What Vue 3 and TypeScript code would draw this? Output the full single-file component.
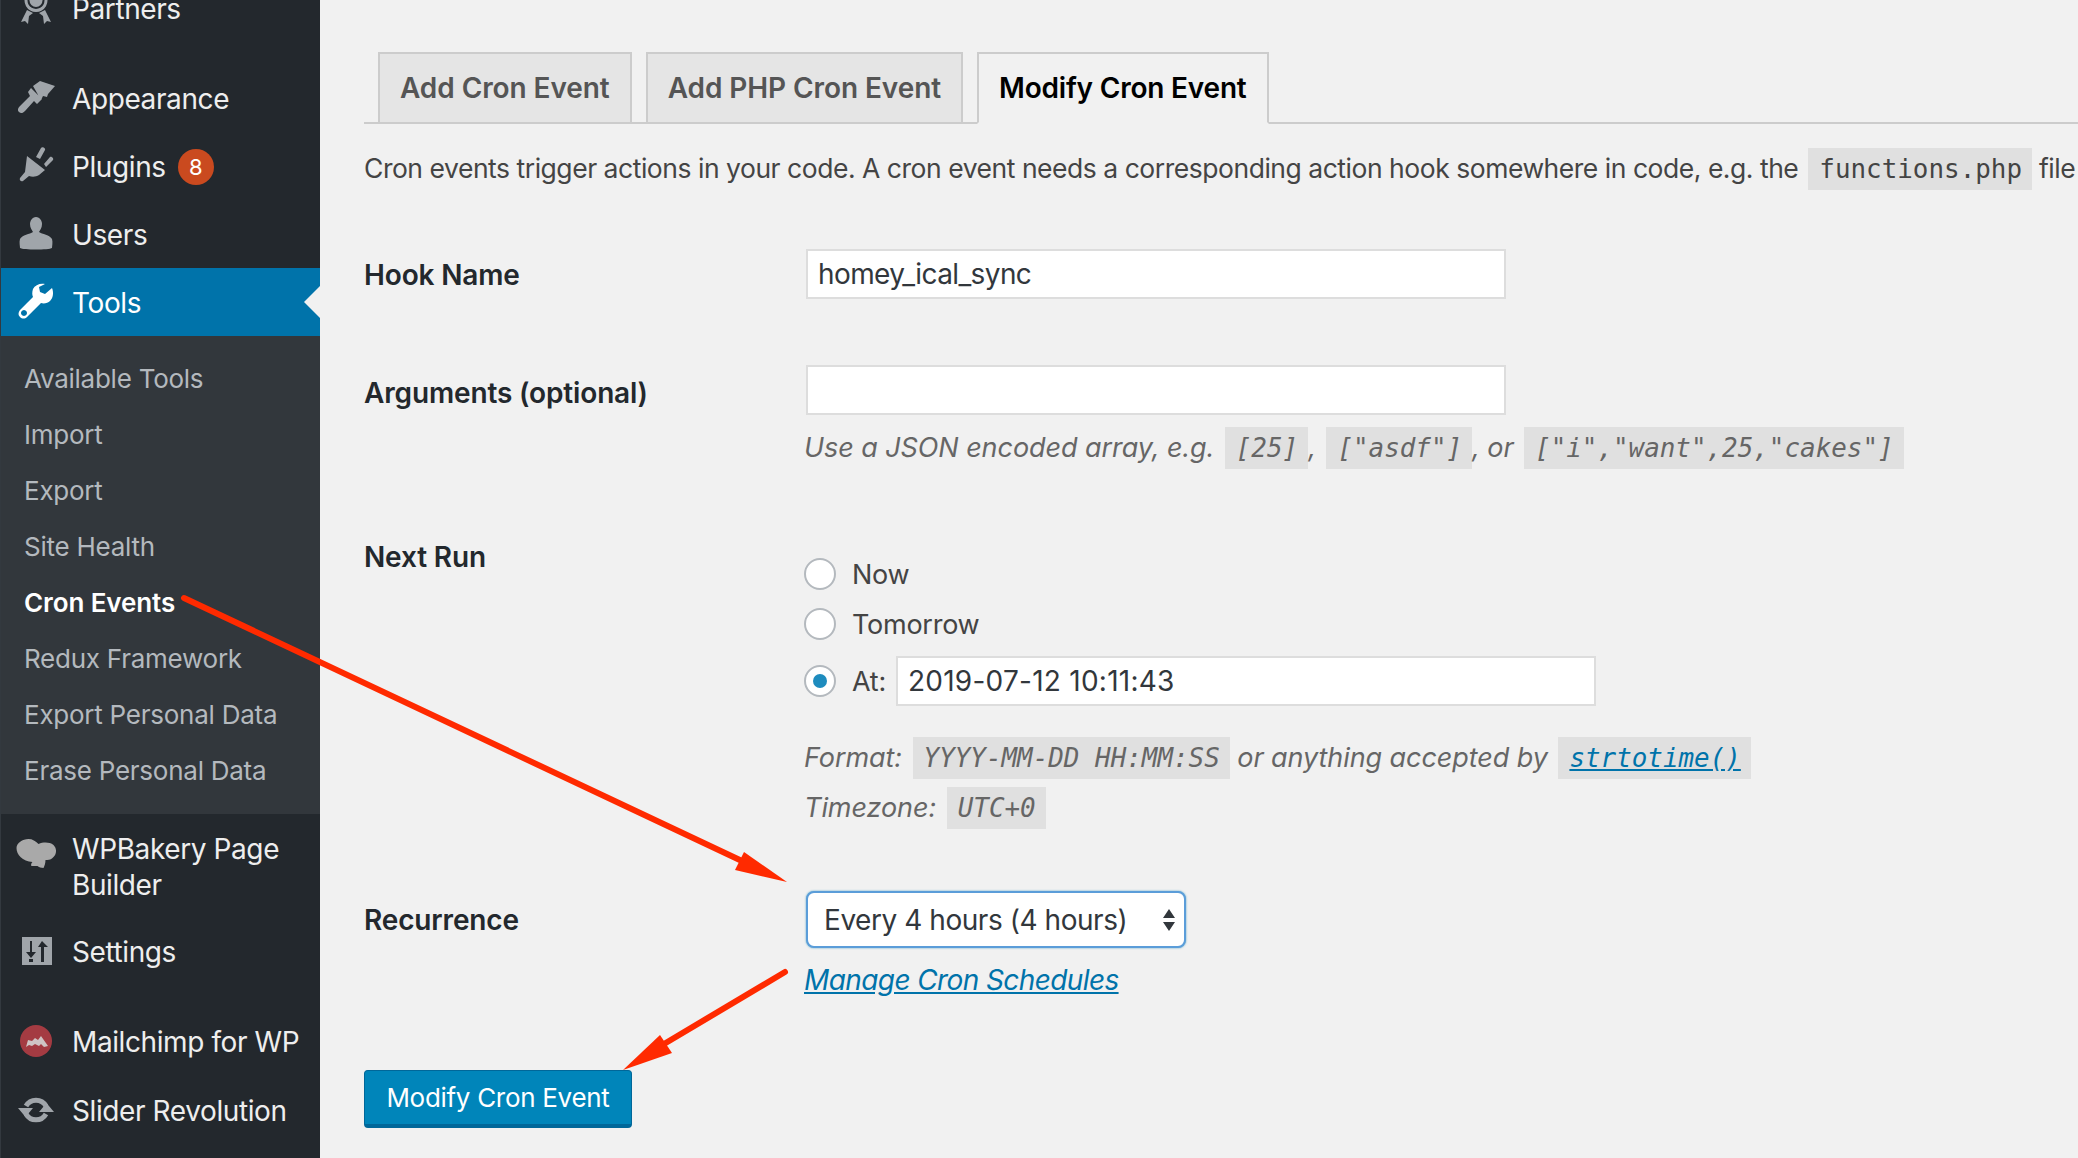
<script setup lang="ts">
const submenu = [
  { label: 'Available Tools' },
  { label: 'Import' },
  { label: 'Export' },
  { label: 'Site Health' },
  { label: 'Cron Events', current: true },
  { label: 'Redux Framework' },
  { label: 'Export Personal Data' },
  { label: 'Erase Personal Data' },
]
</script>

<template>
  <div class="page">
    <aside class="sidebar">
      <div class="menu-item partners">
        <svg class="icon" viewBox="0 0 40 40"><path fill-rule="evenodd" d="M18 1a11.500 11.500 0 1 0 .01 0zM18 4a8.500 8.500 0 1 1-.01 0z" fill="#a0a5aa"/><circle cx="18" cy="12.500" r="6.500" fill="#a0a5aa"/><path d="M9 22l6 3-4 3-1 8-3-3-4 1zM27 22l-6 3 4 3 1 8 3-3 4 1z" fill="#a0a5aa"/></svg>
        <span>Partners</span>
      </div>
      <div class="menu-item appearance">
        <svg class="icon" viewBox="0 0 40 40"><path d="M15 8l7-5 15 5-7 8-1 3-4-1-2 4zM13 10l11 11-5 5-3-3-9 10c-2 2-4 3-6 1s-1-4 1-6l10-10-2-4z" fill="#a0a5aa"/></svg>
        <span>Appearance</span>
      </div>
      <div class="menu-item plugins">
        <svg class="icon" viewBox="0 0 40 40"><path d="M18 11l5-9c1-2 5 0 4 2l-5 9zM26 18l6-7c2-1 4 2 3 3l-7 7zM9 10l18 14-6 5c-3 2-7 2-10 1l-6 5c-2 1-4-1-3-3l5-6z" fill="#a0a5aa"/></svg>
        <span>Plugins</span>
        <span class="badge">8</span>
      </div>
      <div class="menu-item users">
        <svg class="icon" viewBox="0 0 40 40"><path d="M18 3c4 0 6 4 6 7 0 4-2 6-3 8 3 2 11 3 13 7 1 3 0 7 0 9-3 2-29 2-32 0 0-2-1-6 0-9 2-4 10-5 13-7-1-2-3-4-3-8 0-3 2-7 6-7z" fill="#a0a5aa"/></svg>
        <span>Users</span>
      </div>
      <div class="menu-item active">
        <svg class="icon" viewBox="0 0 40 40"><path d="M34 6l-7 6-5-2-1-5 6-3c-5-1-10 1-12 5-1 3-1 6 0 8L2 28c-2 3-2 5 0 7s5 2 7 0l14-14c3 1 7 0 9-2 3-3 4-8 2-13zM6 28a3 3 0 1 1-.01 0z" fill="#fff" fill-rule="evenodd"/></svg>
        <span>Tools</span>
      </div>
      <ul class="submenu">
        <li v-for="item in submenu" :key="item.label" :class="{ current: item.current }">{{ item.label }}</li>
      </ul>
      <div class="menu-item bakery">
        <svg class="icon wide" viewBox="0 0 40 30"><path d="M0 9C0 4 6 0 12 0c4 0 7 2 10 5 5-2 11-2 15 1 4 4 3 10-1 13-2 2-5 2-7 2 0 3-1 6-2 8-2 0-5-1-6-2l-6 0c-1-1 0-3 1-4C6 22 0 16 0 9z" fill="#a9a9a9"/></svg>
        <span>WPBakery Page<br />Builder</span>
      </div>
      <div class="menu-item settings">
        <svg class="icon" viewBox="0 0 40 40"><path fill-rule="evenodd" d="M4 6h30v28H4zM12 10v11H8l5 6 5-6h-4V10zM11 28v3h4v-3zM24 10l-4 6h3v15h3V16h4z" fill="#a0a5aa"/></svg>
        <span>Settings</span>
      </div>
      <div class="menu-item mailchimp">
        <svg class="icon" viewBox="0 0 40 40"><circle cx="18" cy="20" r="16" fill="#a43b42"/><path d="M8 26l2-7 4 1 3-3 3 2 3-4 7 10-4 1-3-3-2 2-4-2-3 2-3-1z" fill="#cfc4c4"/></svg>
        <span>Mailchimp for WP</span>
      </div>
      <div class="menu-item slider">
        <svg class="icon" viewBox="0 0 40 40"><path d="M8 16A11.500 11.500 0 0 1 28 16M28 24A11.500 11.500 0 0 1 8 24" fill="none" stroke="#a0a5aa" stroke-width="5"/><path d="M0 18h15l-7.500 9zM21 22h15l-7.500-9z" fill="#a0a5aa"/></svg>
        <span>Slider Revolution</span>
      </div>
    </aside>

    <main class="content">
      <nav class="tabs">
        <a class="tab">Add Cron Event</a>
        <a class="tab">Add PHP Cron Event</a>
        <a class="tab selected">Modify Cron Event</a>
      </nav>
      <p class="intro">Cron events trigger actions in your code. A cron event needs a corresponding action hook somewhere in code, e.g. the <code>functions.php</code> file</p>

      <div class="row hook">
        <label>Hook Name</label>
        <div class="field"><div class="input hook-input">homey_ical_sync</div></div>
      </div>

      <div class="row args">
        <label>Arguments (optional)</label>
        <div class="field">
          <div class="input"></div>
          <p class="help">Use a JSON encoded array, e.g. <code>[25]</code>, <code>["asdf"]</code>, or <code>["i","want",25,"cakes"]</code></p>
        </div>
      </div>

      <div class="row next">
        <label>Next Run</label>
        <div class="field">
          <div class="radio-row first"><span class="radio"></span>Now</div>
          <div class="radio-row"><span class="radio"></span>Tomorrow</div>
          <div class="radio-row at"><span class="radio on"></span>At:<div class="input date">2019-07-12 10:11:43</div></div>
          <p class="help format">Format: <code>YYYY-MM-DD HH:MM:SS</code> or anything accepted by <code><a class="link">strtotime()</a></code></p>
          <p class="help zone">Timezone: <code>UTC+0</code></p>
        </div>
      </div>

      <div class="row recurrence">
        <label>Recurrence</label>
        <div class="field">
          <div class="select">
            <span>Every 4 hours (4 hours)</span>
            <svg class="updown" viewBox="0 0 14 24"><path d="M7 1l6 9H1zM7 23L1 14h12z" fill="#32373c"/></svg>
          </div>
          <a class="manage">Manage Cron Schedules</a>
        </div>
      </div>

      <button class="submit">Modify Cron Event</button>
    </main>

    <svg class="arrows" viewBox="0 0 2078 1158">
      <path d="M184 598L742 861" stroke="#ff2a00" stroke-width="6" stroke-linecap="round" fill="none"/>
      <path d="M787 882L744 852L735 870z" fill="#ff2a00"/>
      <path d="M785 972L664 1044" stroke="#ff2a00" stroke-width="6" stroke-linecap="round" fill="none"/>
      <path d="M623 1070L660 1035L672 1053z" fill="#ff2a00"/>
    </svg>
  </div>
</template>

<style>
html, body { margin: 0; background: #f1f1f1; overflow: hidden; }
</style>

<style scoped>
.page {
  position: relative;
  display: flex;
  width: 2078px;
  height: 1158px;
  overflow: hidden;
  background: #f1f1f1;
  font-family: Inter, "Liberation Sans", sans-serif;
  color: #23282d;
}
.sidebar {
  flex: 0 0 320px;
  box-sizing: border-box;
  height: 1158px;
  background: #23282d;
  border-left: 1px solid #33393f;
  overflow: hidden;
}
.menu-item {
  display: flex;
  align-items: center;
  height: 68px;
  color: #eeeeee;
  font-size: 28px;
  letter-spacing: -0.4px;
  line-height: 36px;
}
.menu-item > span:not(.badge) { position: relative; top: 1px; }
.menu-item .icon { flex: 0 0 40px; width: 40px; height: 40px; margin: 0 14px 0 17px; }
.partners { margin-top: -26px; }
.appearance { margin-top: 22px; }
.active { background: #0073aa; color: #fff; position: relative; }
.active::after {
  content: "";
  position: absolute;
  right: 0;
  top: 50%;
  margin-top: -16px;
  border: 16px solid transparent;
  border-right-color: #f1f1f1;
}
.badge {
  width: 36px;
  height: 36px;
  margin-left: 12px;
  border-radius: 50%;
  background: #ca4a1f;
  color: #fff;
  font-size: 22px;
  line-height: 36px;
  text-align: center;
  letter-spacing: 0;
  position: relative;
  top: 1px;
}
.submenu {
  list-style: none;
  margin: 0;
  padding: 15px 0 15px;
  background: #32373c;
}
.submenu li {
  height: 56px;
  padding-left: 23px;
  color: #b4b9be;
  font-size: 26px;
  line-height: 56px;
  letter-spacing: -0.25px;
}
.submenu li.current { color: #fff; font-weight: 600; letter-spacing: -0.1px; }
.bakery { height: 72px; margin-top: 16px; }
.bakery .icon.wide { height: 30px; margin: -24px 15px 0 15px; flex-basis: 41px; width: 41px; }
.settings { margin-top: 15px; }
.mailchimp { margin-top: 22px; }
.slider { margin-top: 1px; }
.content {
  flex: 1 1 0;
  min-width: 0;
  box-sizing: border-box;
  padding: 52px 0 0 44px;
  font-size: 27px;
}
.tabs {
  display: flex;
  gap: 14px;
  height: 72px;
  box-sizing: border-box;
  padding-left: 14px;
  border-bottom: 2px solid #ccc;
}
.tab {
  box-sizing: border-box;
  height: 72px;
  padding: 0 20px;
  border: 2px solid #ccc;
  background: #e5e5e5;
  color: #555;
  font-size: 28px;
  font-weight: 600;
  line-height: 68px;
  letter-spacing: -0.08px;
  white-space: nowrap;
}
.tab.selected { background: #f1f1f1; color: #000; border-bottom-color: #f1f1f1; letter-spacing: -0.2px; }
code {
  display: inline-block;
  margin-left: 3px;
  padding: 0 10px 0 11px;
  background: rgba(0, 0, 0, 0.07);
  font-family: "DejaVu Sans Mono", monospace;
  font-size: 25.900px;
  line-height: 42px;
  letter-spacing: 0;
  color: inherit;
}
.intro {
  margin: 23px 0 0;
  height: 42px;
  font-size: 26.500px;
  line-height: 42px;
  letter-spacing: -0.47px;
  color: #444;
  white-space: nowrap;
}
.row { display: flex; align-items: flex-start; }
.row > label {
  flex: 0 0 440px;
  font-size: 28px;
  font-weight: 600;
  letter-spacing: -0.15px;
  line-height: 36px;
  color: #23282d;
}
.field { flex: 1 1 0; min-width: 0; }
.input {
  box-sizing: border-box;
  width: 700px;
  height: 50px;
  margin-left: 2px;
  padding: 0 10px;
  border: 2px solid #ddd;
  background: #fff;
  color: #32373c;
  font-size: 28px;
  line-height: 46px;
  letter-spacing: -0.2px;
}
.hook-input { letter-spacing: -0.6px; }
.hook { margin-top: 60px; }
.hook > label { padding-top: 8px; }
.args { margin-top: 66px; }
.args > label { padding-top: 10px; }
.help {
  margin: 12px 0 0;
  color: #666;
  font-size: 27px;
  font-style: italic;
  line-height: 42px;
  letter-spacing: -0.07px;
  white-space: nowrap;
}
.next { margin-top: 66px; }
.next > label { padding-top: 4px; }
.radio-row {
  display: flex;
  align-items: center;
  height: 50px;
  color: #444;
  font-size: 27px;
  letter-spacing: -0.25px;
}
.radio-row.first { margin-top: 14px; }
.radio {
  box-sizing: border-box;
  position: relative;
  width: 32px;
  height: 32px;
  margin-right: 16px;
  border: 2px solid #b4b9be;
  border-radius: 50%;
  background: #fff;
}
.radio.on::after {
  content: "";
  position: absolute;
  left: 7px;
  top: 7px;
  width: 14px;
  height: 14px;
  border-radius: 50%;
  background: #1e8cbe;
}
.radio-row.at { margin-top: 7px; }
.input.date { margin-left: 10px; letter-spacing: 0.25px; }
.format { margin-top: 27px; line-height: 50px; }
.zone { margin-top: 0; line-height: 50px; }
.link { color: #0073aa; text-decoration: underline; }
.recurrence { margin-top: 58px; }
.recurrence > label { padding-top: 11px; }
.select {
  box-sizing: border-box;
  display: flex;
  align-items: center;
  justify-content: space-between;
  width: 380px;
  height: 57px;
  margin-left: 2px;
  padding: 0 8px 0 16px;
  border: 2px solid #5b9dd9;
  border-radius: 8px;
  background: #fff;
  box-shadow: 0 0 2px rgba(30, 140, 190, 0.8);
  color: #32373c;
  font-size: 28px;
  letter-spacing: -0.45px;
}
.updown { width: 14px; height: 24px; }
.manage {
  display: block;
  margin-top: 14px;
  color: #0073aa;
  font-size: 28px;
  font-style: italic;
  line-height: 36px;
  letter-spacing: -0.6px;
  text-decoration: underline;
}
.submit {
  display: block;
  box-sizing: border-box;
  width: 268px;
  height: 58px;
  margin-top: 72px;
  padding: 0;
  border: 1px solid #006799;
  border-bottom-width: 4px;
  border-radius: 4px;
  background: #0085ba;
  color: #fff;
  font-family: inherit;
  font-size: 26px;
  letter-spacing: -0.3px;
}
.arrows {
  position: absolute;
  left: 0;
  top: 0;
  width: 2078px;
  height: 1158px;
  pointer-events: none;
}
</style>
